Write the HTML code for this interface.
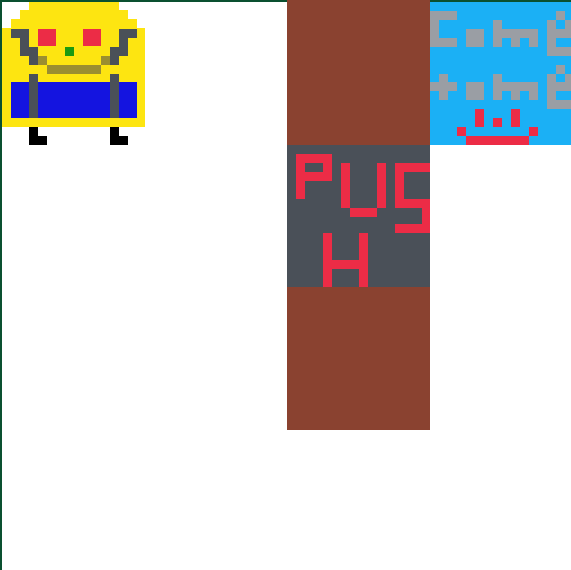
<!DOCTYPE html>
<html><head><style>
html,body{margin:0;padding:0;}
body{width:571px;height:570px;position:relative;overflow:hidden;background:#fff;}
div{position:absolute;}
.y{background:#fde511}.r{background:#ec2c46}.b{background:#1414e0}.g{background:#4a5058}
.o{background:#9a8e30}.n{background:#1a9a10}.k{background:#000}.s{background:#1bb0f5}
.l{background:#9a9ea4}.w{background:#8a4230}
</style></head><body>
<div style="left:0;top:0;width:2px;height:570px;background:#0a5030"></div>
<div style="left:0;top:0;width:571px;height:2px;background:#0a5030"></div>

<!-- character -->
<div class="y" style="left:29px;top:2px;width:90px;height:8px"></div>
<div class="y" style="left:20px;top:10px;width:108px;height:9px"></div>
<div class="y" style="left:11px;top:19px;width:126px;height:9px"></div>
<div class="y" style="left:2px;top:28px;width:143px;height:99px"></div>
<div class="r" style="left:38px;top:29px;width:18px;height:17px"></div>
<div class="r" style="left:83px;top:29px;width:18px;height:17px"></div>
<div class="n" style="left:65px;top:47px;width:9px;height:9px"></div>
<div class="g" style="left:11px;top:29px;width:18px;height:9px"></div>
<div class="g" style="left:20px;top:38px;width:9px;height:9px"></div>
<div class="g" style="left:20px;top:47px;width:18px;height:9px"></div>
<div class="g" style="left:29px;top:56px;width:9px;height:9px"></div>
<div class="o" style="left:38px;top:56px;width:9px;height:9px"></div>
<div class="o" style="left:47px;top:65px;width:54px;height:9px"></div>
<div class="o" style="left:101px;top:56px;width:9px;height:9px"></div>
<div class="g" style="left:110px;top:56px;width:9px;height:9px"></div>
<div class="g" style="left:110px;top:47px;width:18px;height:9px"></div>
<div class="g" style="left:119px;top:38px;width:9px;height:9px"></div>
<div class="g" style="left:119px;top:29px;width:18px;height:9px"></div>
<div class="b" style="left:11px;top:82px;width:126px;height:36px"></div>
<div class="g" style="left:29px;top:74px;width:9px;height:44px"></div>
<div class="g" style="left:110px;top:74px;width:9px;height:44px"></div>
<div class="k" style="left:29px;top:127px;width:9px;height:18px"></div>
<div class="k" style="left:38px;top:136px;width:9px;height:9px"></div>
<div class="k" style="left:110px;top:127px;width:9px;height:18px"></div>
<div class="k" style="left:119px;top:136px;width:9px;height:9px"></div>

<!-- brown column -->
<div class="w" style="left:287px;top:0;width:143px;height:430px"></div>
<!-- push tile -->
<div class="g" style="left:287px;top:145px;width:143px;height:142px"></div>
<div class="r" style="left:296px;top:154px;width:36px;height:27px"></div>
<div class="g" style="left:305px;top:163px;width:18px;height:9px"></div>
<div class="r" style="left:296px;top:181px;width:9px;height:18px"></div>
<div class="r" style="left:341px;top:163px;width:9px;height:45px"></div>
<div class="r" style="left:377px;top:163px;width:9px;height:45px"></div>
<div class="r" style="left:350px;top:208px;width:27px;height:9px"></div>
<div class="r" style="left:395px;top:163px;width:35px;height:9px"></div>
<div class="r" style="left:395px;top:172px;width:9px;height:27px"></div>
<div class="r" style="left:395px;top:199px;width:35px;height:9px"></div>
<div class="r" style="left:422px;top:208px;width:8px;height:16px"></div>
<div class="r" style="left:395px;top:224px;width:35px;height:9px"></div>
<div class="r" style="left:323px;top:233px;width:9px;height:54px"></div>
<div class="r" style="left:359px;top:233px;width:9px;height:54px"></div>
<div class="r" style="left:332px;top:260px;width:27px;height:9px"></div>

<!-- blue tile -->
<div class="s" style="left:430px;top:2px;width:141px;height:143px"></div>
<!-- C -->
<div class="l" style="left:430px;top:11px;width:27px;height:9px"></div>
<div class="l" style="left:430px;top:11px;width:9px;height:36px"></div>
<div class="l" style="left:430px;top:38px;width:27px;height:9px"></div>
<!-- o -->
<div class="l" style="left:466px;top:29px;width:18px;height:18px"></div>
<!-- m -->
<div class="l" style="left:493px;top:20px;width:9px;height:27px"></div>
<div class="l" style="left:493px;top:29px;width:45px;height:9px"></div>
<div class="l" style="left:511px;top:38px;width:9px;height:9px"></div>
<div class="l" style="left:529px;top:38px;width:9px;height:9px"></div>
<!-- e -->
<div class="l" style="left:556px;top:11px;width:9px;height:9px"></div>
<div class="l" style="left:547px;top:20px;width:9px;height:36px"></div>
<div class="l" style="left:565px;top:20px;width:6px;height:9px"></div>
<div class="l" style="left:556px;top:29px;width:15px;height:9px"></div>
<div class="l" style="left:556px;top:47px;width:15px;height:9px"></div>
<!-- t -->
<div class="l" style="left:439px;top:74px;width:9px;height:26px"></div>
<div class="l" style="left:430px;top:82px;width:27px;height:9px"></div>
<!-- o -->
<div class="l" style="left:466px;top:82px;width:18px;height:18px"></div>
<!-- m -->
<div class="l" style="left:493px;top:74px;width:9px;height:26px"></div>
<div class="l" style="left:493px;top:82px;width:45px;height:9px"></div>
<div class="l" style="left:511px;top:91px;width:9px;height:9px"></div>
<div class="l" style="left:529px;top:91px;width:9px;height:9px"></div>
<!-- e -->
<div class="l" style="left:556px;top:65px;width:9px;height:9px"></div>
<div class="l" style="left:547px;top:74px;width:9px;height:35px"></div>
<div class="l" style="left:565px;top:74px;width:6px;height:8px"></div>
<div class="l" style="left:556px;top:82px;width:15px;height:9px"></div>
<div class="l" style="left:556px;top:100px;width:15px;height:9px"></div>
<!-- face -->
<div class="r" style="left:475px;top:109px;width:9px;height:18px"></div>
<div class="r" style="left:511px;top:109px;width:9px;height:18px"></div>
<div class="r" style="left:493px;top:118px;width:9px;height:9px"></div>
<div class="r" style="left:457px;top:127px;width:9px;height:9px"></div>
<div class="r" style="left:529px;top:127px;width:9px;height:9px"></div>
<div class="r" style="left:466px;top:136px;width:63px;height:9px"></div>
</body></html>
